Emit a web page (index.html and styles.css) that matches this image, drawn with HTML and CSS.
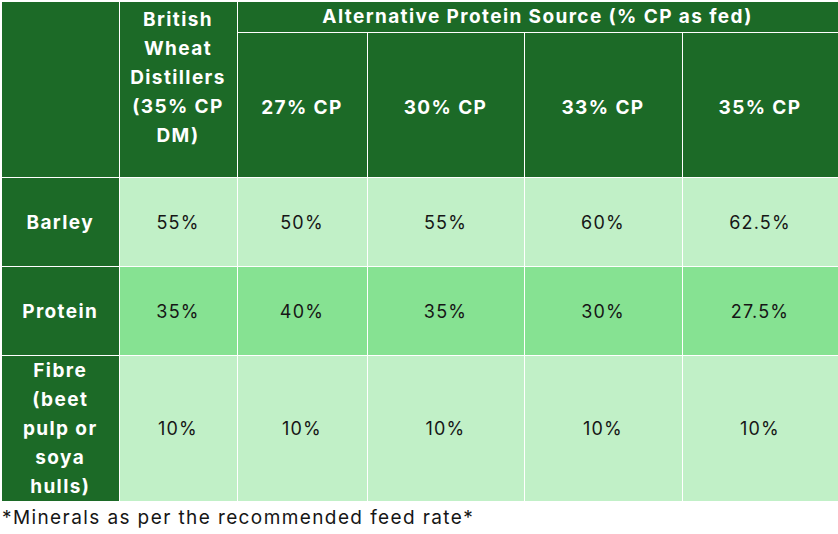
FILE: index.html
```html
<!DOCTYPE html>
<html>
<head>
<meta charset="utf-8">
<link rel="stylesheet" href="styles.css">
</head>
<body>
<table class="feed">
  <colgroup>
    <col class="c0"><col class="c1"><col class="c2"><col class="c3"><col class="c4"><col class="c5">
  </colgroup>
  <thead>
    <tr class="h1">
      <th rowspan="2"></th>
      <th rowspan="2" class="top">British Wheat Distillers (35% CP DM)</th>
      <th colspan="4">Alternative Protein Source (% CP as fed)</th>
    </tr>
    <tr class="h2">
      <th>27% CP</th>
      <th>30% CP</th>
      <th>33% CP</th>
      <th>35% CP</th>
    </tr>
  </thead>
  <tbody>
    <tr class="r-light r-short">
      <th>Barley</th><td>55%</td><td>50%</td><td>55%</td><td>60%</td><td>62.5%</td>
    </tr>
    <tr class="r-mid r-short">
      <th>Protein</th><td>35%</td><td>40%</td><td>35%</td><td>30%</td><td>27.5%</td>
    </tr>
    <tr class="r-light r-tall">
      <th>Fibre (beet pulp or soya hulls)</th><td>10%</td><td>10%</td><td>10%</td><td>10%</td><td>10%</td>
    </tr>
  </tbody>
</table>
<p class="note">*Minerals as per the recommended feed rate*</p>
</body>
</html>
```
FILE: styles.css
```css
html, body {
  margin: 0;
  padding: 0;
  background: #ffffff;
}
body {
  font-family: Inter, "Liberation Sans", sans-serif;
  color: #161616;
}
.feed {
  margin: 2px 0 0 2px;
  width: 836px;
  border-collapse: collapse;
  table-layout: fixed;
  background: #1c6a27;
}
.c0 { width: 117px; }
.c1 { width: 118px; }
.c2 { width: 130px; }
.c3 { width: 157px; }
.c4 { width: 158px; }
.c5 { width: 156px; }
.feed th, .feed td {
  border: 1px solid #ffffff;
  padding: 0 10px;
  text-align: center;
  vertical-align: middle;
  font-size: 19px;
  line-height: 29px;
}
.feed tr:first-child th { border-top: none; }
.feed tr th:first-child { border-left: none; }
.feed th {
  background: #1c6a27;
  color: #ffffff;
  font-weight: 700;
  letter-spacing: 1.4px;
}
.feed th.top {
  vertical-align: top;
  padding-top: 3px;
}
.h2 th { padding-top: 5px; }
.r-short th, .r-short td { padding-top: 2px; }
.feed td {
  font-weight: 400;
  font-size: 18px;
  letter-spacing: 1.2px;
}
.h1 { height: 30px; }
.h2 { height: 145px; }
.r-short { height: 89px; }
.r-tall { height: 144px; }
.r-light td { background: #c1f0c7; }
.r-mid td { background: #86e292; }
.note {
  margin: 1px 0 0 2px;
  font-size: 19px;
  line-height: 29px;
  letter-spacing: 1.4px;
  color: #161616;
}
```
